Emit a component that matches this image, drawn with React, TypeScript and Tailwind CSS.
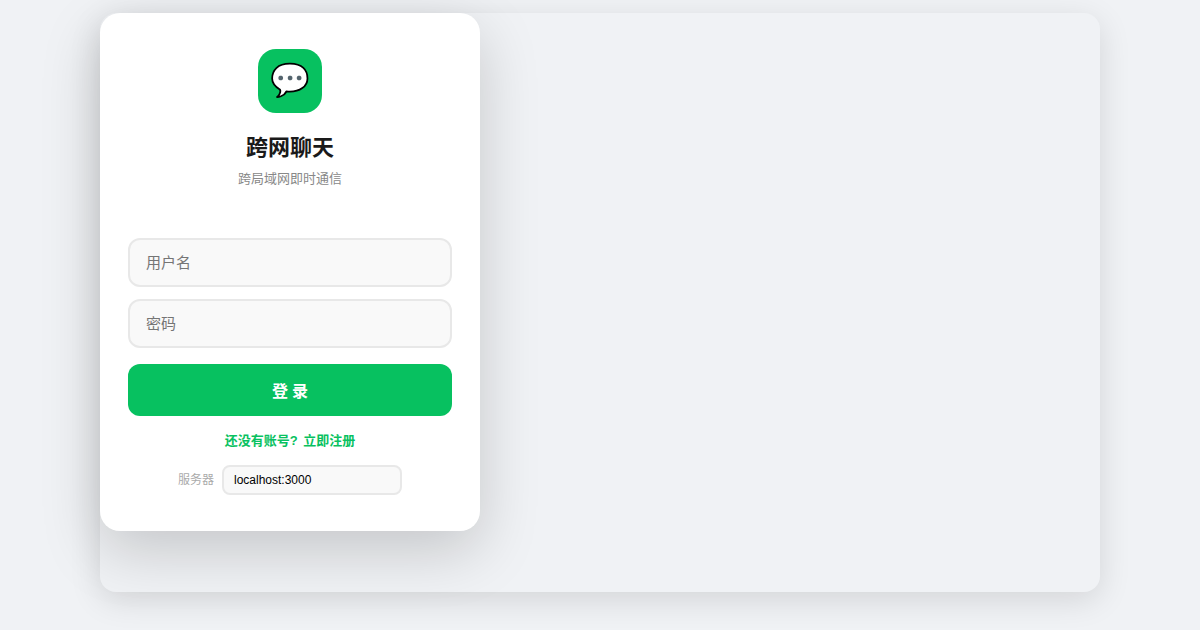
export default function App() {
  const font = "font-['Liberation_Sans','Noto_Sans_CJK_SC',sans-serif]";
  return (
    <div className={`h-[630px] w-[1200px] overflow-hidden bg-[#f0f2f5] pl-[100px] pt-[13px] ${font}`}>
      <div className="h-[579px] w-[1000px] rounded-2xl bg-[#f0f2f5] shadow-[0_8px_32px_rgba(0,0,0,0.12)]">
        <div className="flex h-[518px] w-[380px] flex-col rounded-[20px] bg-white px-7 pt-9 shadow-[0_20px_60px_rgba(0,0,0,0.18)]">
          <div className="flex flex-col items-center">
            <div className="flex h-16 w-16 items-center justify-center rounded-[18px] bg-[#07c160] pb-0.5 text-[32px] leading-none">💬</div>
            <h1 className="mt-[18px] text-[22px] leading-[33px] font-bold text-[#1a1a1a]">跨网聊天</h1>
            <p className="mt-[5px] text-[13px] leading-5 text-[#888888]">跨局域网即时通信</p>
          </div>
          <div className="mt-[49px] flex flex-col">
            <input placeholder="用户名" className="h-[49px] w-full rounded-xl border-2 border-[#e8e8e8] bg-[#f9f9f9] px-4 text-[15px] outline-none placeholder:text-[#757575]" />
            <input placeholder="密码" className="mt-3 h-[49px] w-full rounded-xl border-2 border-[#e8e8e8] bg-[#f9f9f9] px-4 text-[15px] outline-none placeholder:text-[#757575]" />
            <button className="mt-4 h-[52px] w-full rounded-xl bg-[#07c160] pl-1 pt-1 text-base font-bold tracking-[4px] text-white">登录</button>
          </div>
          <p className="mt-4 text-center text-[13px] leading-[18px] font-semibold text-[#07c160] [word-spacing:2px]">还没有账号? 立即注册</p>
          <div className="mt-[15px] flex items-center justify-center gap-2">
            <span className="text-xs text-[#aaaaaa]">服务器</span>
            <input defaultValue="localhost:3000" className="h-[30px] w-[180px] rounded-lg border-2 border-[#e8e8e8] bg-[#f9f9f9] px-2.5 text-xs text-black outline-none" />
          </div>
        </div>
      </div>
    </div>
  );
}
